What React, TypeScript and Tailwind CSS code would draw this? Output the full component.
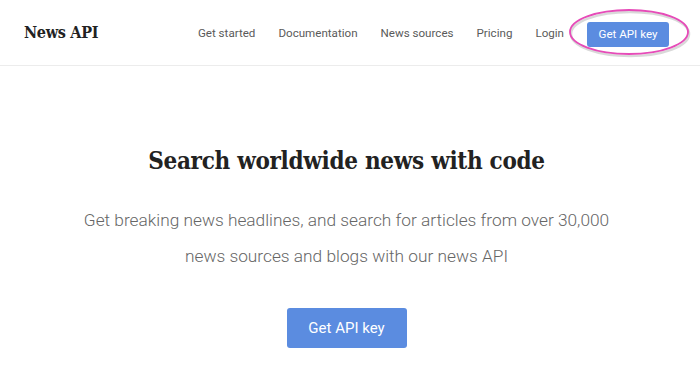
import React from 'react';

const navLinks = ['Get started', 'Documentation', 'News sources', 'Pricing', 'Login'];

export default function App() {
  return (
    <div className="min-h-screen bg-white font-['Roboto',sans-serif]">
      {/* Header */}
      <header className="relative flex h-[66px] items-center justify-between border-b border-[#ececec] pl-6 pr-[31px]">
        <span className="pt-[1px] font-['DejaVu_Serif_Condensed','DejaVu_Serif',serif] text-[16px] font-bold font-stretch-condensed tracking-[-0.3px] text-[#222]">
          News API
        </span>
        <nav className="flex items-center pt-[3px]">
          {navLinks.map((link) => (
            <a key={link} className="mr-[23px] text-[11.6px] text-[#5a5a5a]">
              {link}
            </a>
          ))}
          <div className="relative">
            <button className="h-[25px] w-[82px] rounded-[3px] bg-[#5b8ce0] text-[11.6px] text-white">
              Get API key
            </button>
            {/* highlight annotation */}
            <svg
              className="pointer-events-none absolute left-[-20px] top-[-15px]"
              width="126"
              height="54"
              viewBox="0 0 126 54"
            >
              <ellipse cx="63" cy="28" rx="59" ry="22" fill="none" stroke="#aaa" strokeWidth="2.5" opacity="0.45" />
              <ellipse cx="62" cy="26" rx="59" ry="22" fill="none" stroke="#e64bb8" strokeWidth="1.8" />
            </svg>
          </div>
        </nav>
      </header>

      {/* Hero */}
      <main className="flex flex-col items-center pr-[7px] pt-[79px] text-center">
        <h1 className="font-['DejaVu_Serif_Condensed','DejaVu_Serif',serif] text-[24px] font-bold font-stretch-condensed leading-[32px] tracking-[-0.3px] text-[#222]">
          Search worldwide news with code
        </h1>
        <p className="mt-[25px] text-[17.3px] font-light leading-[36px] text-[#666]">
          Get breaking news headlines, and search for articles from over 30,000
          <br />
          news sources and blogs with our news API
        </p>
        <button className="mt-[34px] h-[40px] w-[120px] rounded-[3px] bg-[#5b8ce0] text-[15px] text-white">
          Get API key
        </button>
      </main>
    </div>
  );
}
